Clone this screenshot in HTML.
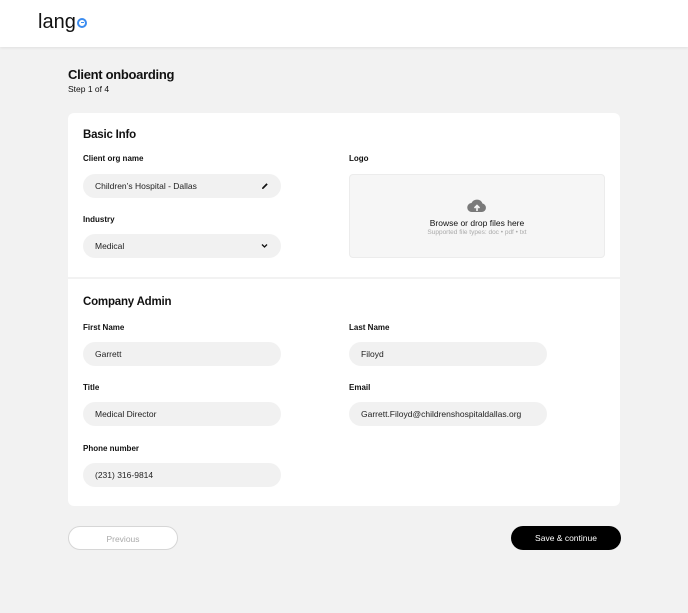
<!DOCTYPE html>
<html><head><meta charset="utf-8"><style>
*{box-sizing:border-box;margin:0;padding:0}
body{width:688px;height:613px;background:#f2f2f2;font-family:"Liberation Sans",sans-serif;color:#111;position:relative;overflow:hidden}
.hdr{position:absolute;left:0;top:0;width:688px;height:47px;background:#fff;box-shadow:0 1px 3px rgba(0,0,0,.08)}
.logo{position:absolute;left:38px;top:11px;font-size:20px;color:#111}
.logo i{display:inline-block;width:10px;height:10px;border:2px solid #3b8cf0;border-radius:50%;position:relative;top:0px;margin-left:1px}
.logo i:after{content:"";position:absolute;left:2px;top:2px;width:3px;height:1px;background:#3b8cf0}
.abs{position:absolute}
h1{position:absolute;left:68px;top:67px;font-size:13px;font-weight:bold;letter-spacing:-.3px}
.step{position:absolute;left:68px;top:84px;font-size:8.5px}
.card{position:absolute;left:68px;width:552px;background:#fff}
h2{position:absolute;left:15px;font-size:11.5px;font-weight:bold;letter-spacing:-.2px}
.lbl{position:absolute;font-size:8px;font-weight:bold}
.inp{position:absolute;width:198px;height:24px;border-radius:12px;background:#f1f1f1;font-size:8.5px;padding:7px 12px;color:#222}
.btn{position:absolute;top:526px;height:24px;border-radius:12px;font-size:8.5px;text-align:center;line-height:24px}
</style></head><body>
<div class="hdr"><div class="logo">lang<i></i></div></div>
<h1>Client onboarding</h1>
<div class="step">Step 1 of 4</div>
<div class="card" style="top:113px;height:164px;border-radius:6px 6px 0 0">
<h2 style="top:16px">Basic Info</h2>
<div class="lbl" style="left:15px;top:41px">Client org name</div>
<div class="inp" style="left:15px;top:61px">Children’s Hospital - Dallas
<svg class="abs" style="left:178px;top:8px" width="8" height="8" viewBox="0 0 8 8"><path d="M1 7 L1.3 5.5 L5.5 1.3 L6.7 2.5 L2.5 6.7Z" fill="#111"/></svg></div>
<div class="lbl" style="left:15px;top:102px">Industry</div>
<div class="inp" style="left:15px;top:121px">Medical
<svg class="abs" style="left:178px;top:9px" width="7" height="6" viewBox="0 0 7 6"><path d="M1 1.5 L3.5 4 L6 1.5" stroke="#111" stroke-width="1.3" fill="none"/></svg></div>
<div class="lbl" style="left:281px;top:41px">Logo</div>
<div class="abs" style="left:281px;top:61px;width:256px;height:84px;background:#f6f6f6;border:1px solid #ececec;border-radius:4px;text-align:center">
<svg style="margin-top:23px" width="20" height="15" viewBox="0 0 20 15"><path d="M5 14 A4.5 4.5 0 0 1 4.5 5 A6 6 0 0 1 15.5 5.5 A4.3 4.3 0 0 1 15 14Z" fill="#7a7a7a"/><path d="M10 13 V7.5 M7.5 10 L10 7.5 L12.5 10" stroke="#f6f6f6" stroke-width="1.6" fill="none"/></svg>
<div style="font-size:8.5px;margin-top:0px">Browse or drop files here</div>
<div style="font-size:6.5px;color:#aaa;margin-top:1px">Supported file types: doc • pdf • txt</div>
</div>
</div>
<div class="card" style="top:279px;height:227px;border-radius:0 0 6px 6px">
<h2 style="top:17px">Company Admin</h2>
<div class="lbl" style="left:15px;top:44px">First Name</div>
<div class="inp" style="left:15px;top:63px">Garrett</div>
<div class="lbl" style="left:281px;top:44px">Last Name</div>
<div class="inp" style="left:281px;top:63px">Filoyd</div>
<div class="lbl" style="left:15px;top:104px">Title</div>
<div class="inp" style="left:15px;top:123px">Medical Director</div>
<div class="lbl" style="left:281px;top:104px">Email</div>
<div class="inp" style="left:281px;top:123px">Garrett.Filoyd@childrenshospitaldallas.org</div>
<div class="lbl" style="left:15px;top:165px">Phone number</div>
<div class="inp" style="left:15px;top:184px">(231) 316-9814</div>
</div>
<div class="btn" style="left:68px;width:110px;background:#fff;border:1px solid #d6d6d6;color:#aaa">Previous</div>
<div class="btn" style="left:511px;width:110px;background:#000;color:#fff">Save &amp; continue</div>
</body></html>
